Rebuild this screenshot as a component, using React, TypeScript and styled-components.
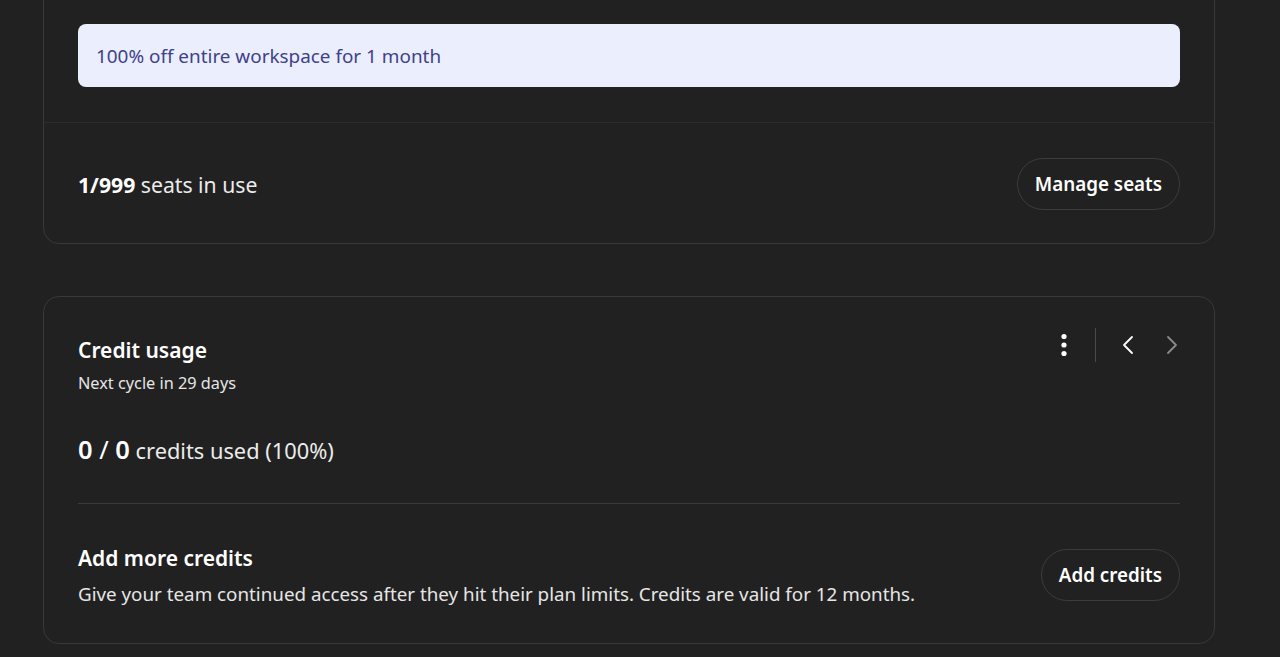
import React from 'react';
import styled, { createGlobalStyle } from 'styled-components';

const GlobalStyle = createGlobalStyle`
  html, body {
    margin: 0;
    padding: 0;
    background: #212121;
    overflow: hidden;
  }
  body {
    font-family: 'Noto Sans', 'Open Sans', Arial, sans-serif;
    color: #ececec;
  }
  * {
    box-sizing: border-box;
  }
`;

const StDivPage = styled.div`
  display: flex;
  flex-direction: column;
  gap: 52px;
  padding: 0 65px 0 43px;
  height: 657px;
`;

const StDivCard = styled.div<{ $clipped?: boolean }>`
  display: flex;
  flex-direction: column;
  border: 1px solid #383838;
  border-radius: 16px;
  margin-top: ${({ $clipped }) => ($clipped ? '-30px' : '0')};
  padding-top: ${({ $clipped }) => ($clipped ? '30px' : '0')};
`;

const StDivSection = styled.div<{ $divider?: boolean }>`
  padding: 23px 34px 35px;
  border-bottom: ${({ $divider }) => ($divider ? '1px solid #2c2c2c' : 'none')};
`;

const StDivPromo = styled.div`
  display: flex;
  align-items: center;
  height: 63px;
  padding: 0 18px;
  background: #ebeefd;
  border-radius: 8px;
  color: #3f4289;
  font-size: 18.9px;
`;

const StDivRow = styled.div<{ $pad?: string }>`
  display: flex;
  align-items: center;
  justify-content: space-between;
  padding: ${({ $pad }) => $pad || '0'};
`;

const StSpanSeats = styled.span`
  font-size: 21.2px;
  color: #ececec;

  b {
    font-weight: 700;
    color: #fff;
  }
`;

const StButtonPill = styled.button`
  height: 52px;
  padding: 0 17px;
  border-radius: 26px;
  border: 1px solid #3c3c3c;
  background: transparent;
  color: #fff;
  font-family: inherit;
  font-size: 18.8px;
  font-weight: 600;
  cursor: pointer;
`;

const StDivCardBody = styled.div`
  display: flex;
  flex-direction: column;
  padding: 34px 34px 37px;
`;

const StDivHeader = styled.div`
  display: flex;
  justify-content: space-between;
  align-items: flex-start;
`;

const StDivTitleBlock = styled.div`
  display: flex;
  flex-direction: column;
  gap: 9px;
  padding-top: 5px;
`;

const StH2Title = styled.h2`
  margin: 0;
  font-size: 21px;
  line-height: 28px;
  font-weight: 600;
  color: #fff;
`;

const StPSub = styled.p`
  margin: 0;
  font-size: 16.3px;
  line-height: 20px;
  color: #e6e6e6;
`;

const StDivTools = styled.div`
  display: flex;
  align-items: center;
  height: 34px;
  margin-top: -3px;
`;

const StButtonIcon = styled.button<{ $dim?: boolean }>`
  display: flex;
  align-items: center;
  justify-content: center;
  width: 32px;
  height: 32px;
  padding: 0;
  border: none;
  background: transparent;
  color: ${({ $dim }) => ($dim ? '#8a8a8a' : '#fff')};
  cursor: pointer;
`;

const StDivToolDivider = styled.div`
  width: 1px;
  height: 34px;
  background: #4a4a4a;
  margin: 0 16px 0 15px;
`;

const StPUsage = styled.p`
  margin: 40px 0 0;
  font-size: 21.8px;
  line-height: 32px;
  color: #ececec;
`;

const StSpanUsageNum = styled.span`
  font-size: 25.5px;
  color: #fff;

  b {
    font-weight: 600;
  }
`;

const StHrLine = styled.hr`
  border: none;
  height: 1px;
  background: #3a3a3a;
  margin: 36px 0 40px;
`;

const StDivAddText = styled.div`
  display: flex;
  flex-direction: column;
  gap: 10px;
`;

const StPDesc = styled.p`
  margin: 0;
  font-size: 18.8px;
  line-height: 24px;
  color: #e6e6e6;
`;

const Dots: React.FC = () => (
  <svg width="8" height="24" viewBox="0 0 8 24" fill="currentColor">
    <circle cx="4" cy="3.5" r="2.6" />
    <circle cx="4" cy="12" r="2.6" />
    <circle cx="4" cy="20.5" r="2.6" />
  </svg>
);

const Chevron: React.FC<{ dir: 'left' | 'right' }> = ({ dir }) => (
  <svg width="16" height="20" viewBox="0 0 16 20" fill="none" stroke="currentColor" strokeWidth="1.8" strokeLinecap="round" strokeLinejoin="round">
    {dir === 'left' ? <polyline points="12,2 4,10 12,18" /> : <polyline points="4,2 12,10 4,18" />}
  </svg>
);

const App: React.FC = () => {
  return (
    <>
      <GlobalStyle />
      <StDivPage>
        <StDivCard $clipped>
          <StDivSection $divider>
            <StDivPromo>100% off entire workspace for 1 month</StDivPromo>
          </StDivSection>
          <StDivRow $pad="35px 34px 33px">
            <StSpanSeats>
              <b>1/999</b> seats in use
            </StSpanSeats>
            <StButtonPill>Manage seats</StButtonPill>
          </StDivRow>
        </StDivCard>

        <StDivCard>
          <StDivCardBody>
            <StDivHeader>
              <StDivTitleBlock>
                <StH2Title>Credit usage</StH2Title>
                <StPSub>Next cycle in 29 days</StPSub>
              </StDivTitleBlock>
              <StDivTools>
                <StButtonIcon aria-label="More">
                  <Dots />
                </StButtonIcon>
                <StDivToolDivider />
                <StButtonIcon aria-label="Previous">
                  <Chevron dir="left" />
                </StButtonIcon>
                <StButtonIcon $dim aria-label="Next" style={{ marginLeft: 12, marginRight: -8 }}>
                  <Chevron dir="right" />
                </StButtonIcon>
              </StDivTools>
            </StDivHeader>

            <StPUsage>
              <StSpanUsageNum>
                <b>0</b> / <b>0</b>
              </StSpanUsageNum>{' '}
              credits used (100%)
            </StPUsage>

            <StHrLine />

            <StDivRow>
              <StDivAddText>
                <StH2Title>Add more credits</StH2Title>
                <StPDesc>
                  Give your team continued access after they hit their plan limits. Credits are valid for 12 months.
                </StPDesc>
              </StDivAddText>
              <StButtonPill>Add credits</StButtonPill>
            </StDivRow>
          </StDivCardBody>
        </StDivCard>
      </StDivPage>
    </>
  );
};

export default App;
